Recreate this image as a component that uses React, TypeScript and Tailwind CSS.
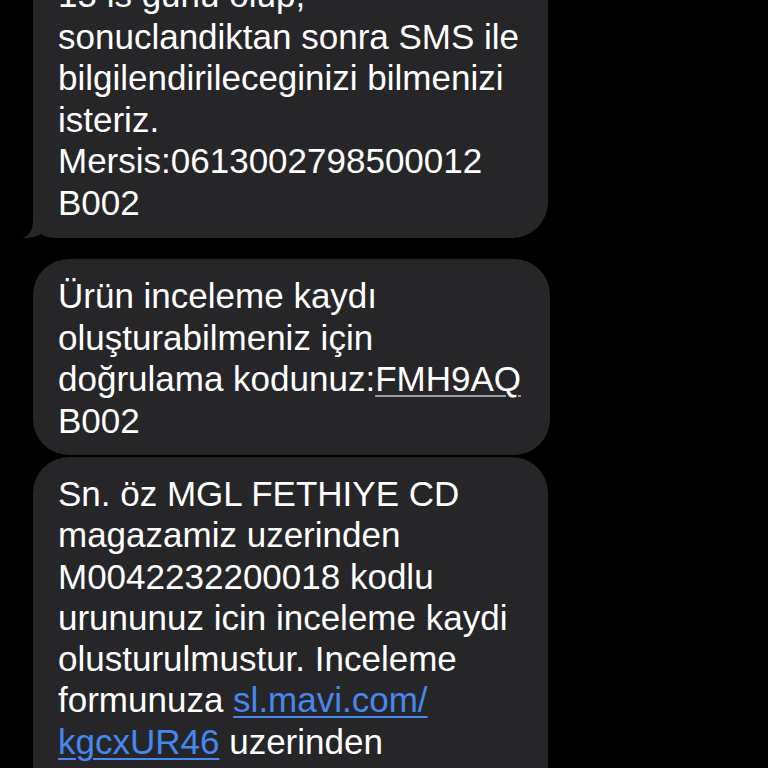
import React from "react"

const font = { fontFamily: '"Liberation Sans", Arial, sans-serif' }

function Tail() {
  return (
    <svg
      className="absolute left-[-11px] bottom-0 w-[50px] h-[50px]"
      viewBox="0 0 50 50"
      fill="#262628"
    >
      <path d="M11 0 L11 32 C11 42 7 48 0 50 C7 50.5 14 49 19 46 C24 49.5 30 50 38 50 L50 50 L50 0 Z" />
    </svg>
  )
}

export default function App() {
  return (
    <div className="w-[768px] h-[768px] overflow-hidden bg-black text-white" style={font}>
      <div className="flex flex-col pl-[33px]">
        {/* ilk mesaj, üstü kesik */}
        <div className="relative -mt-[124px] w-[515px] rounded-[36px] bg-[#262628] pl-[25px] pt-[15px] pb-[15px] text-[35px] leading-[41.5px]">
          <Tail />
          <div className="relative">
            <div>sureciniz baslamistir. Inceleme</div>
            <div>sureci en gec</div>
            <div>15 is gunu olup,</div>
            <div>sonuclandiktan sonra SMS ile</div>
            <div>bilgilendirileceginizi bilmenizi</div>
            <div>isteriz.</div>
            <div>Mersis:0613002798500012</div>
            <div>B002</div>
          </div>
        </div>

        <div className="mt-[21px] w-[517px] rounded-[36px] bg-[#262628] pl-[25px] pt-[16px] pb-[14px] text-[35px] leading-[41.5px]">
          <div>Ürün inceleme kaydı</div>
          <div>oluşturabilmeniz için</div>
          <div className="whitespace-nowrap">
            doğrulama kodunuz:
            <span className="underline decoration-[#9a9aa0] decoration-[2px] underline-offset-[4px]">FMH9AQ</span>
          </div>
          <div>B002</div>
        </div>

        <div className="mt-[2px] w-[515px] rounded-[36px] bg-[#262628] pl-[25px] pt-[16px] pb-[14px] text-[35px] leading-[41.3px]">
          <div>Sn. öz MGL FETHIYE CD</div>
          <div>magazamiz uzerinden</div>
          <div>M0042232200018 kodlu</div>
          <div className="whitespace-nowrap">urununuz icin inceleme kaydi</div>
          <div>olusturulmustur. Inceleme</div>
          <div>
            formunuza{" "}
            <span className="text-[#4787f0] underline decoration-[2px] underline-offset-[4px]">sl.mavi.com/</span>
          </div>
          <div>
            <span className="text-[#4787f0] underline decoration-[2px] underline-offset-[4px]">kgcxUR46</span> uzerinden
          </div>
          <div>ulasabilirsiniz.</div>
        </div>
      </div>
    </div>
  )
}
